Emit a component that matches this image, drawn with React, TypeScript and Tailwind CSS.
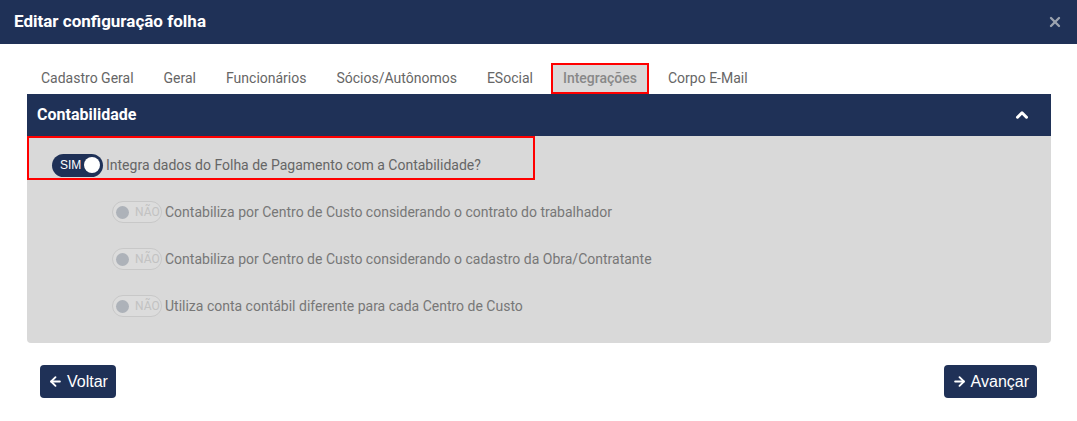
import { ArrowLeft, ArrowRight, ChevronUp, X } from "lucide-react"

const tabs = ["Cadastro Geral", "Geral", "Funcionários", "Sócios/Autônomos", "ESocial", "Integrações", "Corpo E-Mail"]

const subOptions = [
    "Contabiliza por Centro de Custo considerando o contrato do trabalhador",
    "Contabiliza por Centro de Custo considerando o cadastro da Obra/Contratante",
    "Utiliza conta contábil diferente para cada Centro de Custo",
]

function ToggleOn() {
    return (
        <span className="flex items-center justify-between w-[51px] h-[23px] rounded-full bg-[#1f3157] pl-[8px] pr-[3px]">
            <span className="text-white text-[12px] font-['Liberation_Sans',sans-serif]">SIM</span>
            <span className="size-[16px] rounded-full bg-white" />
        </span>
    )
}

function ToggleOff() {
    return (
        <span className="flex items-center gap-[6px] w-[50px] h-[22px] rounded-full border border-[#c8c8c8] bg-[#dcdcdc] pl-[3px]">
            <span className="size-[13px] rounded-full bg-[#adb2b9]" />
            <span className="text-[#c2c2c2] text-[12px]">NÃO</span>
        </span>
    )
}

export default function App() {
    return (
        <div className="w-[1077px] h-[421px] bg-white font-['Roboto',sans-serif]">
            <div className="h-[44px] bg-[#1f3157] flex items-center justify-between pl-[14px] pr-[14px]">
                <h1 className="text-white font-bold text-[17px]">Editar configuração folha</h1>
                <X className="text-[#9ca3af] size-[16px]" strokeWidth={3.5} />
            </div>

            <div className="px-[27px] pt-[20px]">
                <div className="flex items-end h-[30px] pl-[3px]">
                    {tabs.map(tab => tab === "Integrações" ? (
                        <span key={tab} className="h-[31px] px-[10px] mr-[8px] -ml-[1px] flex items-center bg-[#d9d9d9] border-2 border-[#ff0000] text-[14px] text-[#888] font-medium">
                            {tab}
                        </span>
                    ) : (
                        <span key={tab} className="h-[31px] px-[11px] flex items-center text-[14px] text-[#666] mr-[8px]">
                            {tab}
                        </span>
                    ))}
                </div>

                <div className="w-[1024px] rounded-b-[4px] bg-[#d9d9d9] overflow-hidden">
                    <div className="h-[42px] bg-[#1f3157] flex items-center justify-between pl-[10px] pr-[20px]">
                        <span className="text-white font-bold text-[16px]">Contabilidade</span>
                        <ChevronUp className="text-white size-[18px]" strokeWidth={4} />
                    </div>

                    <div className="w-[508px] h-[44px] border-2 border-[#ff0000] flex items-center pl-[23px] pt-[14px] gap-[3px]">
                        <ToggleOn />
                        <span className="text-[14px] text-[#666]">Integra dados do Folha de Pagamento com a Contabilidade?</span>
                    </div>

                    <div className="flex flex-col pl-[85px] pt-[21px] pb-[26px] gap-[25px]">
                        {subOptions.map(option => (
                            <div key={option} className="flex items-center gap-[3px] h-[22px]">
                                <ToggleOff />
                                <span className="text-[14px] text-[#777]">{option}</span>
                            </div>
                        ))}
                    </div>
                </div>

                <div className="flex justify-between mt-[22px] pl-[13px] pr-[13px]">
                    <button className="h-[33px] px-[8px] rounded-[4px] bg-[#1f3157] text-white text-[16px] flex items-center gap-[4px] font-['Liberation_Sans',sans-serif]">
                        <ArrowLeft className="size-[15px]" strokeWidth={3} />
                        Voltar
                    </button>
                    <button className="h-[33px] px-[8px] rounded-[4px] bg-[#1f3157] text-white text-[16px] flex items-center gap-[4px] font-['Liberation_Sans',sans-serif]">
                        <ArrowRight className="size-[15px]" strokeWidth={3} />
                        Avançar
                    </button>
                </div>
            </div>
        </div>
    )
}
